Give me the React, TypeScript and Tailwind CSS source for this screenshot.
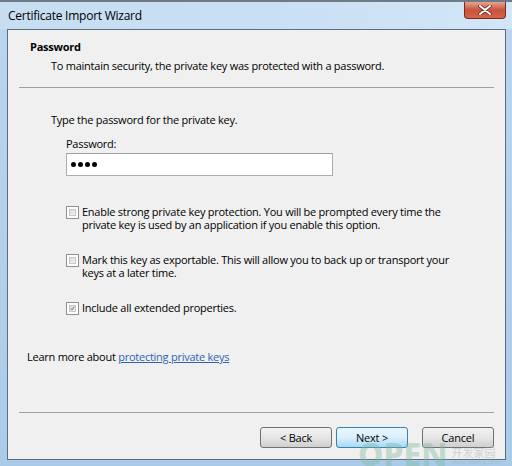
import React from 'react';

const font = { fontFamily: '"Open Sans", "Noto Sans", sans-serif' };

function CheckBox({ checked = false }: { checked?: boolean }) {
  return (
    <div className="mt-[3px] w-[13px] h-[13px] shrink-0 border border-[#8f8f8f] bg-white p-[2px]">
      <div className="w-full h-full bg-gradient-to-br from-[#d8d8d8] to-[#f6f6f6] border border-[#c8c8c8] flex items-center justify-center">
        {checked && (
          <svg width="9" height="9" viewBox="0 0 9 9">
            <path d="M1.5 4.5 L3.6 7 L7.6 1.2" fill="none" stroke="#3a5b8c" strokeWidth="1.6" />
          </svg>
        )}
      </div>
    </div>
  );
}

function Option({ checked, children }: { checked?: boolean; children: React.ReactNode }) {
  return (
    <div className="flex gap-[3px] pl-[58px] pr-[50px]">
      <CheckBox checked={checked} />
      <p className="leading-[13px] pt-[2px]">{children}</p>
    </div>
  );
}

function WizButton({ label, active = false }: { label: string; active?: boolean }) {
  return (
    <button
      className={`w-[72px] h-[21px] rounded-[3px] border text-[11px] leading-none tracking-[-0.2px] text-black ${
        active
          ? 'border-[#3c7fb1] bg-gradient-to-b from-[#eaf6fd] via-[#d9f0fc] to-[#a7d9f5]'
          : 'border-[#707070] bg-gradient-to-b from-[#f2f2f2] via-[#e6e6e6] to-[#cfcfcf]'
      }`}
      style={font}
    >
      {label}
    </button>
  );
}

export default function App() {
  return (
    <div className="relative w-[512px] h-[466px] overflow-hidden bg-gradient-to-b from-[#bcd6ee] to-[#a9cbe9] text-black" style={font}>
      {/* title bar */}
      <div className="h-[29px] border-t-2 border-[#6e7b87] flex justify-between items-start bg-gradient-to-r from-[#c7ddf2] via-[#c9dff4] to-[#d2e6f7]">
        <span className="pl-[8px] pt-[5px] text-[12px] tracking-[-0.25px] leading-[18px]">Certificate Import Wizard</span>
        <div className="mr-[6px] w-[42px] h-[17px] rounded-b-[4px] border border-t-0 border-[#7a2a1e] bg-gradient-to-b from-[#e6a48f] via-[#c9523b] to-[#d6634a] flex items-center justify-center">
          <svg width="14" height="10" viewBox="0 0 14 10">
            <path d="M2 1 L12 9 M12 1 L2 9" stroke="#6b2a20" strokeWidth="3.6" strokeLinecap="round" />
            <path d="M2 1 L12 9 M12 1 L2 9" stroke="#ffffff" strokeWidth="2" strokeLinecap="round" />
          </svg>
        </div>
      </div>

      {/* client area */}
      <div className="ml-[7px] mr-[6px] h-[431px] border border-[#5d6d7b] bg-[#f0f0f0] flex flex-col text-[11px] tracking-[-0.25px]">
        <div className="pt-[9px]">
          <div className="pl-[22px] font-bold leading-4">Password</div>
          <div className="pl-[43px] mt-[3px] leading-4">To maintain security, the private key was protected with a password.</div>
        </div>
        <div className="mx-[11px] mt-[13px] h-px bg-[#a0a0a0]" />

        <div className="mt-[24px] pl-[43px] leading-4">Type the password for the private key.</div>
        <div className="mt-[8px] pl-[58px] leading-4">Password:</div>
        <div className="mt-px ml-[58px] w-[267px] h-[23px] border border-[#abadb3] border-t-[#9ea0a6] bg-white flex items-center pl-[4px] gap-[2px]">
          {[0, 1, 2, 3].map((i) => (
            <span key={i} className="w-[5px] h-[5px] rounded-full bg-black" />
          ))}
        </div>

        <div className="mt-[27px]">
          <Option>
            Enable strong private key protection. You will be prompted every time the private key is used by an application if you enable this option.
          </Option>
        </div>
        <div className="mt-[20px]">
          <Option>
            Mark this key as exportable. This will allow you to back up or transport your keys at a later time.
          </Option>
        </div>
        <div className="mt-[20px]">
          <Option checked>Include all extended properties.</Option>
        </div>

        <div className="mt-[34px] pl-[19px] leading-4">
          Learn more about <a className="text-[#2d64b3] underline">protecting private keys</a>
        </div>

        <div className="mt-auto mx-[11px] h-px bg-[#a0a0a0]" />
        <div className="flex justify-end items-center pr-[11px] pt-[14px] pb-[11px]">
          <WizButton label="< Back" />
          <div className="w-[4px]" />
          <WizButton label="Next >" active />
          <div className="w-[14px]" />
          <WizButton label="Cancel" />
        </div>
      </div>

      {/* site watermark */}
      <div className="absolute left-[358px] top-[442px] flex items-end gap-[4px] pointer-events-none opacity-40">
        <span className="text-[32px] font-extrabold leading-[24px] text-[#7fb89a]" style={{ fontFamily: '"Noto Sans", sans-serif' }}>
          OPEN
        </span>
        <div className="flex flex-col text-[#9aa5a0]">
          <span className="text-[11px] leading-[12px]" style={{ fontFamily: '"Noto Sans CJK SC", sans-serif' }}>开发家园</span>
          <span className="text-[6px] leading-[8px]">www.openjg.com</span>
        </div>
      </div>
    </div>
  );
}
